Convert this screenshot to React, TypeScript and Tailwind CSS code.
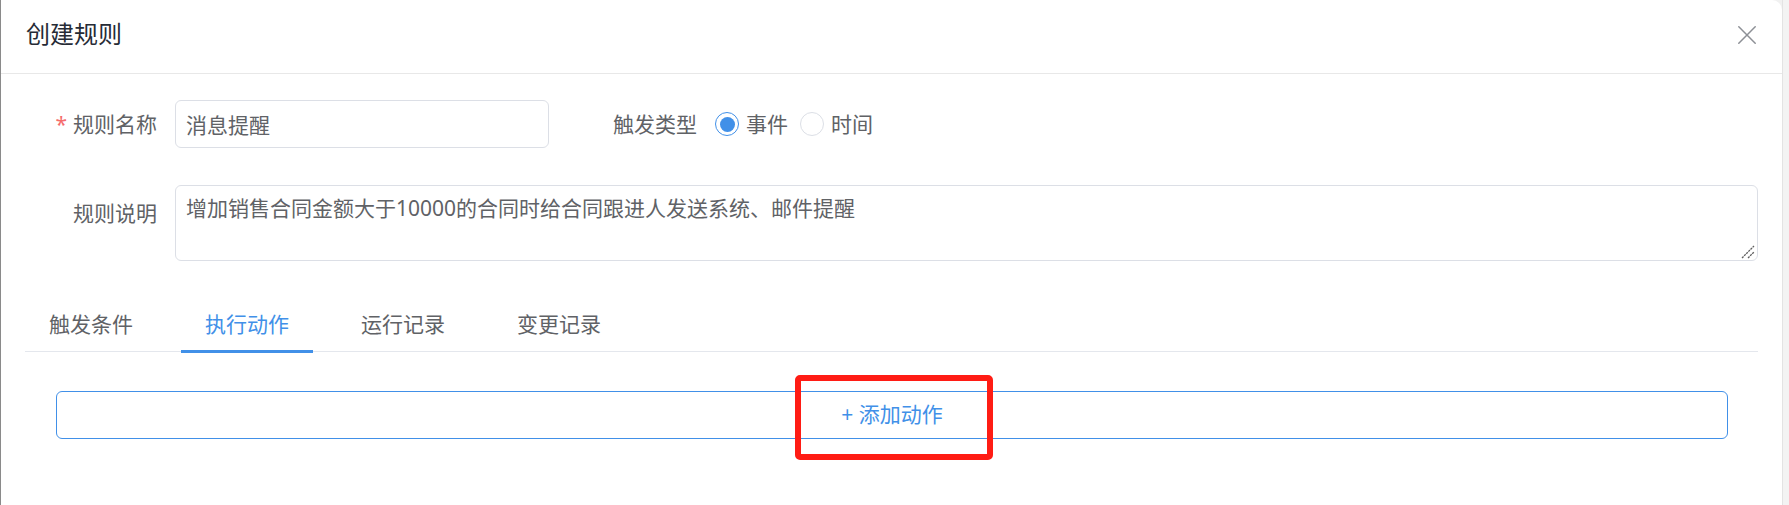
const tabs = ['触发条件', '执行动作', '运行记录', '变更记录'];

function Radio({ checked, label }: { checked?: boolean; label: string }) {
  return (
    <div className="flex items-center">
      <span
        className={
          checked
            ? 'flex h-[24px] w-[24px] items-center justify-center rounded-full border-[1.5px] border-[#4190e8] bg-white'
            : 'flex h-[24px] w-[24px] items-center justify-center rounded-full border-[1.5px] border-[#dcdfe6] bg-white'
        }
      >
        {checked && <span className="h-[15px] w-[15px] rounded-full bg-[#4190e8]" />}
      </span>
      <span className="ml-[7px] text-[21px] leading-[32px] text-[#606266]">{label}</span>
    </div>
  );
}

export default function App() {
  return (
    <div className="relative flex h-[505px] w-[1789px] overflow-hidden bg-[#f1f1f1] font-['Noto_Sans','Noto_Sans_CJK_SC',sans-serif]">
      <div className="w-px bg-[#8a8a8a]" />

      <div className="flex w-[1781px] flex-col rounded-tr-[10px] bg-white">
        {/* header */}
        <div className="flex h-[74px] items-center justify-between border-b border-[#e8e8e8] pb-[5px] pl-[25px] pr-[26px]">
          <h1 className="text-[24px] leading-[32px] text-[#262b36]">创建规则</h1>
          <svg width="18" height="18" viewBox="0 0 18 18" className="mt-[1px]">
            <path d="M0.8 0.8L17.2 17.2M17.2 0.8L0.8 17.2" stroke="#8d9096" strokeWidth="1.5" strokeLinecap="round" />
          </svg>
        </div>

        <div className="px-[24px]">
          {/* 规则名称 / 触发类型 */}
          <div className="mt-[26px] flex h-[48px] items-center">
            <label className="w-[150px] pr-[18px] text-right text-[21px] leading-[32px] text-[#606266]">
              <span className="mr-[6px] text-[#f56c6c]">*</span>
              规则名称
            </label>
            <input
              readOnly
              value="消息提醒"
              className="h-[48px] w-[374px] rounded-[6px] border border-[#dcdfe6] pl-[10px] text-[21px] text-[#606266] outline-none"
            />
            <label className="ml-[16px] w-[150px] pr-[18px] text-right text-[21px] leading-[32px] text-[#606266]">
              触发类型
            </label>
            <div className="flex items-center gap-[12px]">
              <Radio checked label="事件" />
              <Radio label="时间" />
            </div>
          </div>

          {/* 规则说明 */}
          <div className="mt-[37px] flex items-start">
            <label className="mt-[12px] w-[150px] pr-[18px] text-right text-[21px] leading-[32px] text-[#606266]">
              规则说明
            </label>
            <div className="relative h-[76px] flex-1">
              <textarea
                readOnly
                value="增加销售合同金额大于10000的合同时给合同跟进人发送系统、邮件提醒"
                className="h-[76px] w-full resize-none rounded-[6px] border border-[#dcdfe6] px-[10px] py-[7px] text-[21px] leading-[31.5px] text-[#606266] outline-none"
              />
              {/* resize grip */}
              <svg width="14" height="14" viewBox="0 0 14 14" className="absolute bottom-[2px] right-[3px]">
                <path d="M1 13L13 1M7 13L13 7" stroke="#5f5f5f" strokeWidth="1.3" strokeDasharray="2.2 0.8" />
              </svg>
            </div>
          </div>

          {/* tabs */}
          <div className="mt-[30px] flex gap-[24px] border-b border-[#e4e7ed]">
            {tabs.map((t, i) => (
              <div
                key={t}
                className={
                  i === 1
                    ? 'relative flex h-[60px] items-center px-[24px] pt-[8px] text-[21px] text-[#4190e8]'
                    : 'relative flex h-[60px] items-center px-[24px] pt-[8px] text-[21px] text-[#606266]'
                }
              >
                {t}
                {i === 1 && <span className="absolute bottom-[-2px] left-0 right-0 h-[3px] bg-[#4190e8]" />}
              </div>
            ))}
          </div>

          {/* 添加动作 */}
          <button className="mb-[20px] ml-[31px] mr-[29px] mt-[39px] flex h-[48px] w-[1672px] items-center justify-center rounded-[6px] border border-[#4190e8] bg-white text-[21px] text-[#4190e8]">
            + 添加动作
          </button>
        </div>
      </div>

      <div className="w-[7px] border-l border-[#e3e3e3] bg-[#f3f3f3]" />

      {/* annotation */}
      <div className="absolute left-[795px] top-[375px] h-[85px] w-[198px] rounded-[5px] border-[6px] border-[#ff1c14]" />
    </div>
  );
}
